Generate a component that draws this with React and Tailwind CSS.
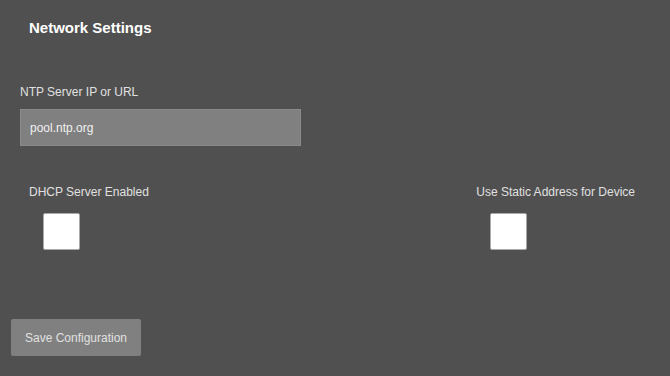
export default function App() {
  return (
    <div className="w-[670px] h-[376px] bg-[#505050] overflow-hidden" style={{ fontFamily: '"Liberation Sans", Arial, sans-serif' }}>
      <div className="pt-[19px] pl-[29px] text-[15px] font-bold text-white leading-[18px]">Network Settings</div>
      <div className="pl-5 mt-[48px]">
        <div className="text-[12px] text-[#e0e0e0] leading-[14px]">NTP Server IP or URL</div>
        <div className="mt-[10px] w-[281px] h-[37px] bg-[#808080] border border-[#8a8a8a] flex items-center pl-[9px] text-[12px] text-[#f0f0f0]">pool.ntp.org</div>
      </div>
      <div className="flex justify-between mt-[39px] pl-[29px] pr-[35px]">
        <div className="flex flex-col">
          <div className="text-[12px] text-[#e0e0e0] leading-[14px]">DHCP Server Enabled</div>
          <div className="mt-[14px] ml-[14px] w-[37px] h-[37px] bg-white rounded-[2px] border border-[#aaa]" />
        </div>
        <div className="flex flex-col">
          <div className="text-[12px] text-[#e0e0e0] leading-[14px]">Use Static Address for Device</div>
          <div className="mt-[14px] ml-[14px] w-[37px] h-[37px] bg-white rounded-[2px] border border-[#aaa]" />
        </div>
      </div>
      <div className="pl-[11px] mt-[69px]">
        <button className="w-[130px] h-[37px] bg-[#808080] rounded-[2px] text-[12px] text-[#e0e0e0]">Save Configuration</button>
      </div>
    </div>
  );
}
